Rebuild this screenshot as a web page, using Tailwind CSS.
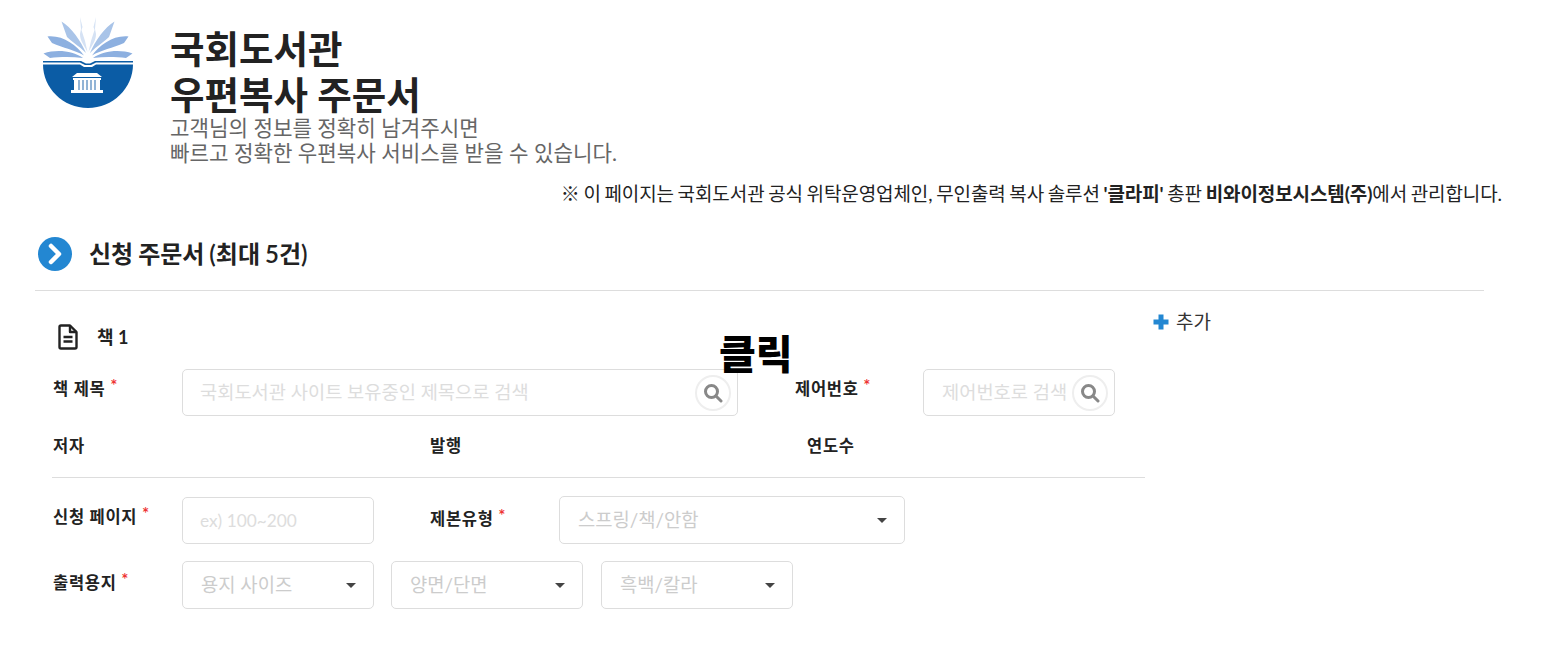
<!DOCTYPE html>
<html lang="ko">
<head>
<meta charset="UTF-8">
<title>국회도서관 우편복사 주문서</title>
<script src="https://cdn.jsdelivr.net/npm/@tailwindcss/browser@4"></script>
</head>
<body class="bg-white text-[#222] font-['Lato','Noto_Sans_CJK_KR',sans-serif] overflow-hidden">
<div class="relative w-[1552px] h-[655px]">
  <!-- header -->
  <div class="flex pl-[43px] pt-[15px]">
    <svg class="w-[90px] h-[93px] shrink-0" viewBox="0 0 90 93">
      <path d="M0 49.500 H37 L41 52 H49 L53 49.500 H90 C90 73 70 93 45 93 C20 93 0 73 0 49.500Z" fill="#0b5ca5"/>
      <path d="M0 46 H38 L43 48.500 H47 L52 46 H90 V47.500 H53 L48 50 H42 L37 47.500 H0Z" fill="#0b5ca5"/>
      <path d="M0.500 38.500 C14 34 30 36 40 43 C28 41.500 16 42 7 43Z" fill="#8db0e0"/>
      <path d="M89.500 38.500 C76 34 60 36 50 43 C62 41.500 74 42 83 43Z" fill="#8db0e0"/>
      <path d="M4.500 21.500 C20 20 33 30 41 40.500 C32 35 20 33 9 28Z" fill="#8db0e0"/>
      <path d="M85.500 21.500 C70 20 57 30 49 40.500 C58 35 70 33 81 28Z" fill="#8db0e0"/>
      <path d="M18.500 6.500 C28 12 38 26 43 38 C36 31 28 26 24 22Z" fill="#a9c4e8"/>
      <path d="M71.500 6.500 C62 12 52 26 47 38 C54 31 62 26 66 22Z" fill="#a9c4e8"/>
      <path d="M37 2 L39.500 12 L38.500 15 L42 26 L44.500 37 C41 30 37 26 37 19 L38 14Z" fill="#d5e2f4"/>
      <path d="M53 2 L50.500 12 L51.500 15 L48 26 L45.500 37 C49 30 53 26 53 19 L52 14Z" fill="#d5e2f4"/>
      <path d="M34 58 H54 L59 62 H29Z" fill="#fff"/>
      <path d="M30 63 H58 V65 H57 V75 H60 V78 H28 V75 H31 V65 H30Z" fill="#fff"/>
      <path d="M36 65 V75 M40 65 V75 M44 65 V75 M48 65 V75 M52 65 V75" stroke="#6f9cc9" stroke-width="1.500"/>
    </svg>
    <div class="ml-[37px] pt-[11px]">
      <h1 class="text-[37.500px] leading-[46px] font-semibold text-[#222]">국회도서관<br>우편복사 주문서</h1>
      <p class="text-[21.200px] leading-[25px] text-[#666] -mt-[2px]">고객님의 정보를 정확히 남겨주시면<br>빠르고 정확한 우편복사 서비스를 받을 수 있습니다.</p>
    </div>
  </div>
  <p class="pr-[50px] mt-[16px] text-right text-[19px] leading-[24px] tracking-[-0.1px] [word-spacing:-1.100px] text-[#222]">※ 이 페이지는 국회도서관 공식 위탁운영업체인, 무인출력 복사 솔루션 <b>'클라피'</b> 총판 <b>비와이정보시스템(주)</b>에서 관리합니다.</p>

  <!-- section title -->
  <div class="flex items-center gap-[17px] pl-[38px] mt-[31px] h-[34px]">
    <svg class="w-[34px] h-[34px]" viewBox="0 0 34 34">
      <circle cx="17" cy="17" r="17" fill="#2387d2"/>
      <path d="M13 9 L21 17 L13 25" fill="none" stroke="#fff" stroke-width="4.500" stroke-linecap="round" stroke-linejoin="round"/>
    </svg>
    <h2 class="text-[24px] font-semibold leading-[34px] [word-spacing:-1px]">신청 주문서 (최대 5건)</h2>
  </div>
  <div class="ml-[35px] w-[1449px] border-t border-[#ddd] mt-[19px]"></div>

  <!-- form -->
  <div class="flex">
    <div class="ml-[52px] w-[1093px]">
      <div class="flex items-center gap-[19px] pl-[6px] mt-[32px] h-[28px]">
        <svg class="w-[20px] h-[26px]" viewBox="0 0 20 26" fill="none" stroke="#222" stroke-width="2.400" stroke-linejoin="round">
          <path d="M1.500 3 Q1.500 1.500 3 1.500 H12 L18.500 8 V23 Q18.500 24.500 17 24.500 H3 Q1.500 24.500 1.500 23Z"/>
          <path d="M12 1.500 V8 H18.500"/>
          <path d="M5.500 13 H14.500 M5.500 17.500 H14.500"/>
        </svg>
        <span class="text-[18px] font-bold">책 1</span>
      </div>

      <div class="flex items-start mt-[18px] h-[47px]">
        <label class="w-[130px] pt-[8px] text-[16.500px] tracking-[0.7px] font-semibold leading-[24px] pl-[1px]">책 제목 <span class="text-[#e33] text-[17px] leading-none align-[3px]">*</span></label>
        <div class="relative w-[556px] h-[47px] border border-[#ddd] rounded-[5px] pl-[17px] flex items-center text-[18.700px] text-[#ddd]">
          국회도서관 사이트 보유중인 제목으로 검색
          <span class="absolute right-[6px] top-[5px] w-[36px] h-[36px] rounded-full border-2 border-[#eee] bg-white flex items-center justify-center">
            <svg class="w-[20px] h-[20px]" viewBox="0 0 20 20" fill="none" stroke="#888" stroke-width="3"><circle cx="8.500" cy="8.500" r="6"/><path d="M13 13 L18 18" stroke-linecap="round"/></svg>
          </span>
        </div>
        <label class="w-[128px] ml-[57px] pt-[8px] text-[16.500px] tracking-[0.7px] font-semibold leading-[24px]">제어번호 <span class="text-[#e33] text-[17px] leading-none align-[3px]">*</span></label>
        <div class="relative w-[192px] h-[47px] border border-[#ddd] rounded-[5px] pl-[18px] flex items-center text-[18.700px] text-[#ddd]">
          제어번호로 검색
          <span class="absolute right-[6px] top-[5px] w-[36px] h-[36px] rounded-full border-2 border-[#eee] bg-white flex items-center justify-center">
            <svg class="w-[20px] h-[20px]" viewBox="0 0 20 20" fill="none" stroke="#888" stroke-width="3"><circle cx="8.500" cy="8.500" r="6"/><path d="M13 13 L18 18" stroke-linecap="round"/></svg>
          </span>
        </div>
      </div>

      <div class="flex mt-[18px] h-[24px] text-[16.500px] tracking-[0.7px] font-semibold leading-[24px]">
        <span class="w-[378px] pl-[1px]">저자</span>
        <span class="w-[377px]">발행</span>
        <span>연도수</span>
      </div>
      <div class="border-t border-[#ddd] mt-[19px]"></div>

      <div class="flex items-start mt-[18px] h-[48px]">
        <label class="w-[130px] pt-[9px] text-[16.500px] tracking-[0.7px] font-semibold leading-[24px] pl-[1px]">신청 페이지 <span class="text-[#e33] text-[17px] leading-none align-[3px]">*</span></label>
        <div class="w-[192px] h-[47px] mt-[1px] border border-[#ddd] rounded-[5px] pl-[17px] flex items-center text-[17.300px] text-[#ddd]">ex) 100~200</div>
        <label class="w-[129px] ml-[56px] pt-[11px] text-[16.500px] tracking-[0.7px] font-semibold leading-[24px]">제본유형 <span class="text-[#e33] text-[17px] leading-none align-[3px]">*</span></label>
        <div class="w-[346px] h-[48px] border border-[#ddd] rounded-[5px] pl-[18px] pr-[17px] flex items-center justify-between text-[18.800px] text-[#ccc]">
          스프링/책/안함
          <span class="w-0 h-0 border-x-[5px] border-x-transparent border-t-[5px] border-t-[#444]"></span>
        </div>
      </div>

      <div class="flex items-start mt-[17px] h-[48px]">
        <label class="w-[130px] pt-[10px] text-[16.500px] tracking-[0.7px] font-semibold leading-[24px] pl-[1px]">출력용지 <span class="text-[#e33] text-[17px] leading-none align-[3px]">*</span></label>
        <div class="w-[192px] h-[48px] border border-[#ddd] rounded-[5px] pl-[18px] pr-[17px] flex items-center justify-between text-[18.800px] text-[#ccc]">
          용지 사이즈
          <span class="w-0 h-0 border-x-[5px] border-x-transparent border-t-[5px] border-t-[#444]"></span>
        </div>
        <div class="w-[192px] h-[48px] ml-[17px] border border-[#ddd] rounded-[5px] pl-[18px] pr-[17px] flex items-center justify-between text-[18.800px] text-[#ccc]">
          양면/단면
          <span class="w-0 h-0 border-x-[5px] border-x-transparent border-t-[5px] border-t-[#444]"></span>
        </div>
        <div class="w-[192px] h-[48px] ml-[18px] border border-[#ddd] rounded-[5px] pl-[18px] pr-[17px] flex items-center justify-between text-[18.800px] text-[#ccc]">
          흑백/칼라
          <span class="w-0 h-0 border-x-[5px] border-x-transparent border-t-[5px] border-t-[#444]"></span>
        </div>
      </div>
    </div>

    <div class="flex items-center gap-[7px] ml-[8px] mt-[19px] h-[24px] text-[19px] text-[#333]">
      <svg class="w-[16px] h-[16px]" viewBox="0 0 16 16"><path d="M5.500 0.500 H10.500 V5.500 H15.500 V10.500 H10.500 V15.500 H5.500 V10.500 H0.500 V5.500 H5.500Z" fill="#2387d2"/></svg>
      추가
    </div>
  </div>

  <div class="absolute left-[719px] top-[326px] text-[40px] leading-[56px] font-black text-black">클릭</div>
</div>
</body>
</html>
